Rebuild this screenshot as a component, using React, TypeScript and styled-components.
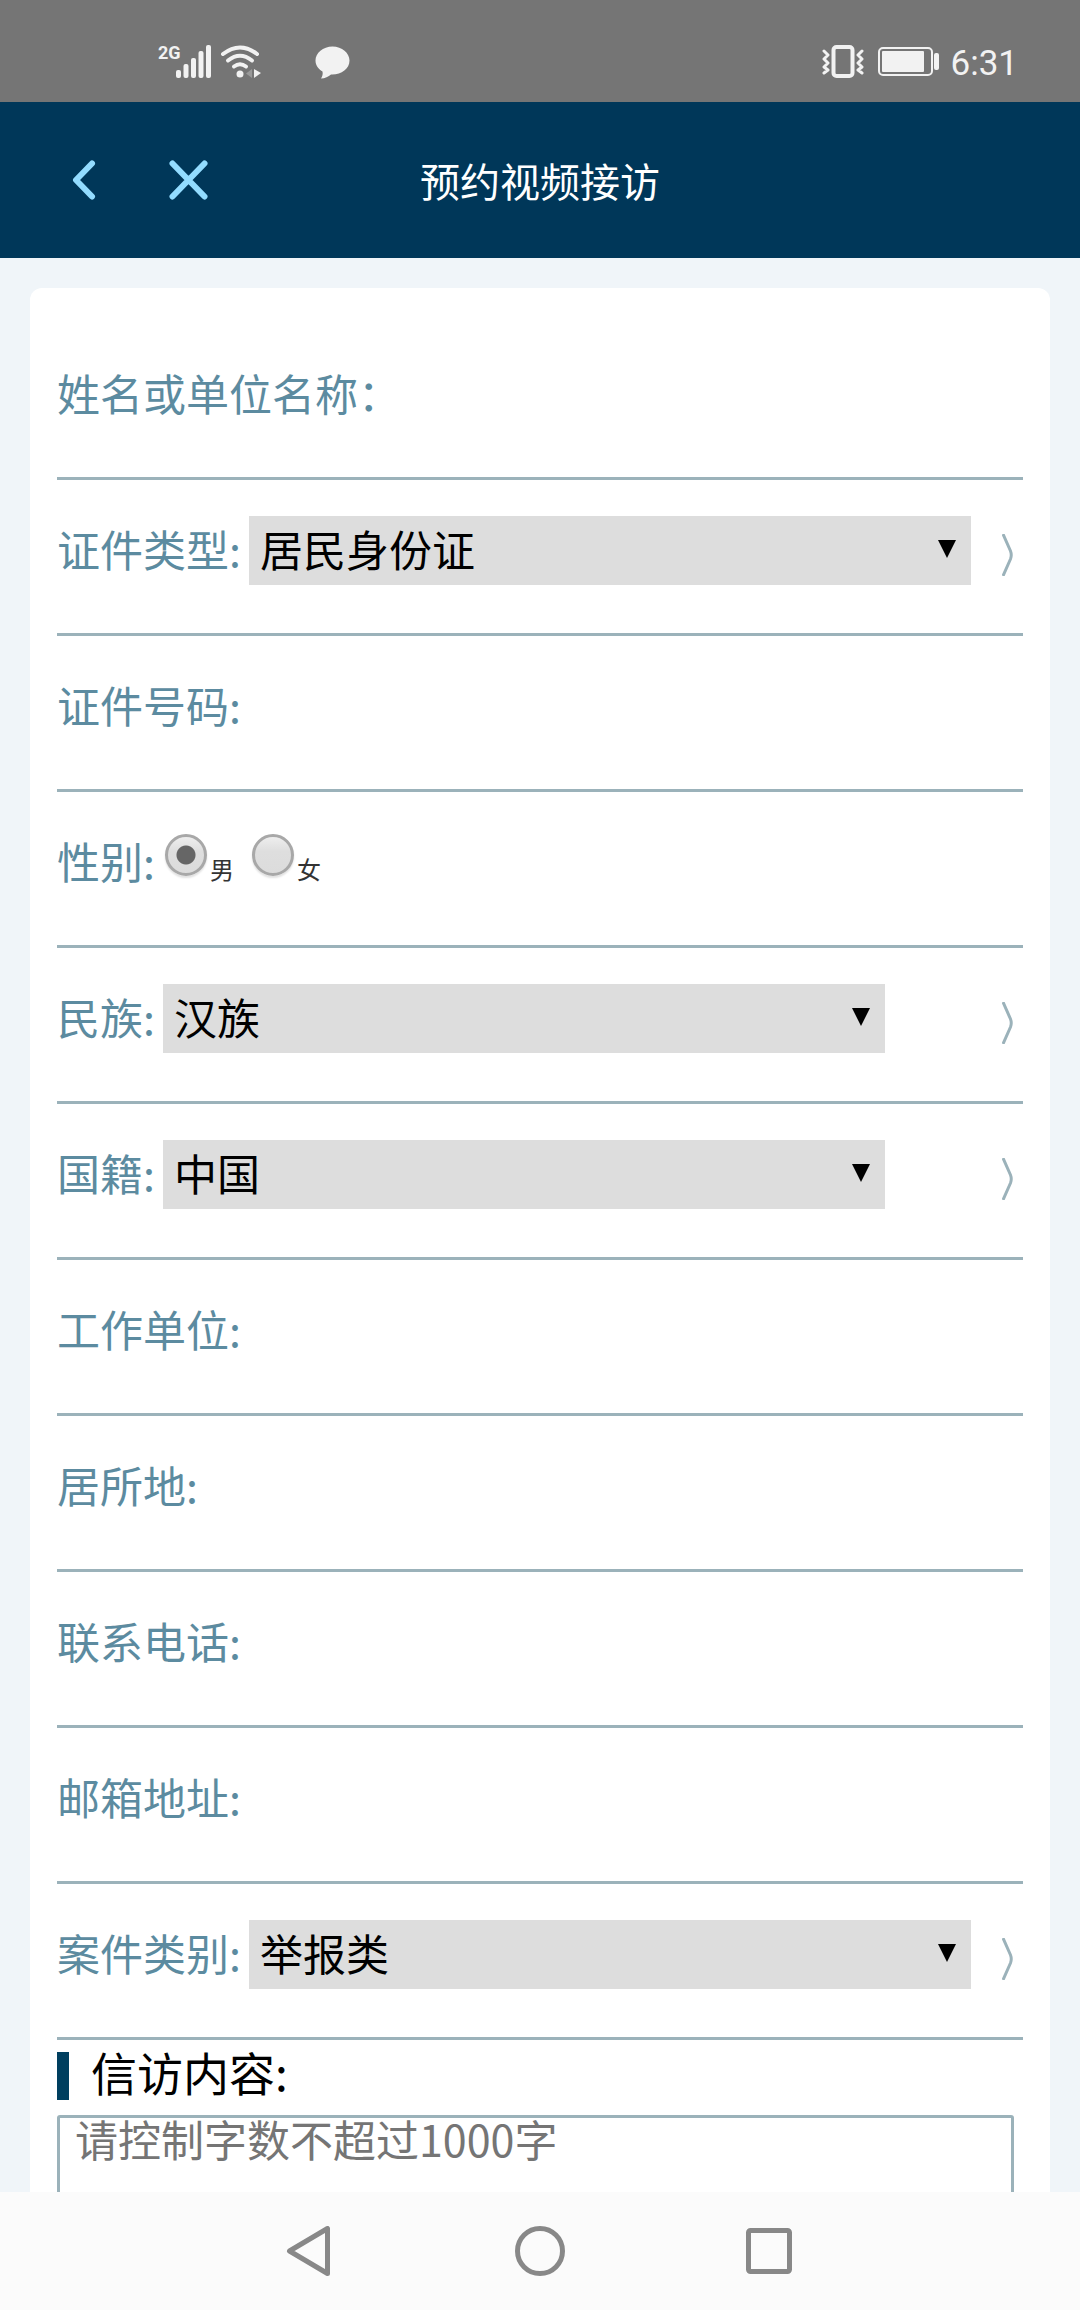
import React, { useState } from 'react';
import styled, { createGlobalStyle } from 'styled-components';

const colors = {
  header: '#003759',
  accent: '#93dcff',
  page: '#f0f5f9',
  label: '#5c8ba0',
  line: '#9bb2ba',
  field: '#dddddd',
  status: '#757575',
  statusInk: '#f2f2f2',
  nav: '#fbfbfb',
  navInk: '#888888',
};

const GlobalStyle = createGlobalStyle`
  *, *::before, *::after { box-sizing: border-box; }
  body {
    margin: 0;
    background: ${colors.page};
    font-family: "Noto Sans CJK SC", "Noto Sans", sans-serif;
    font-size: 43px;
  }
  button, input, select, textarea { font: inherit; margin: 0; }
`;

const Screen = styled.div`
  display: flex;
  flex-direction: column;
  height: 100vh;
  overflow: hidden;
`;

const StatusBar = styled.div`
  display: flex;
  flex: none;
  justify-content: space-between;
  height: 102px;
  padding: 45px 62px 21px 158px;
  background: ${colors.status};
  color: ${colors.statusInk};
`;

const StatusGroup = styled.div<{ $gap: number }>`
  display: flex;
  align-items: flex-start;
  gap: ${({ $gap }) => $gap}px;
  svg { display: block; }
`;

const Network = styled.span`
  display: flex;
  align-items: flex-start;
`;

const NetworkType = styled.span`
  width: 18px;
  font: 700 18px/16px "Liberation Sans Narrow", Roboto, sans-serif;
`;

const Clock = styled.time`
  font: 400 35px/38px Roboto, sans-serif;
`;

const Header = styled.header`
  display: grid;
  flex: none;
  grid-template-columns: 1fr auto 1fr;
  align-items: center;
  height: 156px;
  padding: 0 64px;
  background: ${colors.header};
`;

const HeaderActions = styled.div`
  display: flex;
  gap: 56px;
`;

const IconButton = styled.button`
  display: flex;
  padding: 0;
  border: 0;
  background: none;
  color: inherit;
  cursor: pointer;
`;

const HeaderButton = styled(IconButton)`
  color: ${colors.accent};
`;

const PageTitle = styled.h1`
  margin: 0;
  color: #fff;
  font-size: 40px;
  font-weight: 400;
  line-height: 60px;
`;

const Content = styled.main`
  flex: 1;
  min-height: 0;
  padding: 30px 30px 0;
  overflow-y: auto;
  scrollbar-width: none;
`;

const Card = styled.form`
  padding: 36px 27px;
  border-radius: 12px;
  background: #fff;
`;

const Row = styled.div`
  display: flex;
  align-items: center;
  gap: 8px;
  height: 156px;
  padding: 36px 0 48px;
  border-bottom: 3px solid ${colors.line};
`;

const Label = styled.label`
  flex: none;
  color: ${colors.label};
  line-height: 64px;
  padding-bottom: 5px;
`;

const TextInput = styled.input`
  flex: 1;
  min-width: 0;
  height: 69px;
  padding: 0 12px;
  border: 0;
  outline: 0;
  background: transparent;
  color: #000;
`;

const SelectBox = styled.div`
  position: relative;
  flex: 0 1 722px;
  height: 69px;
`;

const Select = styled.select`
  appearance: none;
  display: block;
  width: 100%;
  height: 69px;
  padding: 0 48px 5px 11px;
  border: 0;
  border-radius: 0;
  background: ${colors.field};
  color: #000;
  line-height: 64px;
`;

const SelectArrow = styled.svg`
  position: absolute;
  top: 24px;
  right: 15px;
  pointer-events: none;
`;

const Chevron = styled.svg`
  flex: none;
  margin: 9px 9px 0 auto;
`;

const RadioGroup = styled.div`
  display: flex;
  align-self: flex-start;
  gap: 18px;
  padding-left: 2px;
`;

const RadioOption = styled.label`
  display: flex;
  align-items: flex-end;
  gap: 3px;
  height: 54px;
  color: #333;
  font-size: 24px;
  line-height: 26px;
`;

const Radio = styled.input`
  appearance: none;
  width: 42px;
  height: 42px;
  margin-bottom: 6px;
  border: 3px solid #a8a8a8;
  border-radius: 50%;
  background: linear-gradient(#eeeeee, #dedede 40%, #dcdcdc);
  box-shadow: 0 2px 2px rgba(0, 0, 0, 0.12);

  &:checked {
    background:
      radial-gradient(circle, #666 0 9px, transparent 10px),
      linear-gradient(#eeeeee, #dedede 40%, #dcdcdc);
  }
`;

const SectionHeading = styled.h2`
  display: flex;
  gap: 22px;
  height: 48px;
  margin: 12px 0 15px;
  color: #000;
  font-size: 46px;
  font-weight: 400;
  line-height: 38px;

  &::before {
    content: "";
    width: 12px;
    background: #003f5f;
  }
`;

const Message = styled.textarea`
  display: block;
  width: calc(100% - 9px);
  height: 320px;
  padding: 0 15px;
  border: 3px solid ${colors.line};
  border-radius: 3px;
  outline: 0;
  resize: none;
  line-height: 40px;
  color: #000;

  &::placeholder { color: #757575; opacity: 1; }
`;

const NavBar = styled.nav`
  display: flex;
  flex: none;
  align-items: center;
  justify-content: center;
  gap: 179px;
  height: 118px;
  background: ${colors.nav};
  color: ${colors.navInk};
`;

type FieldProps = { id: string; label: string };

function TextField({ id, label }: FieldProps) {
  return (
    <Row>
      <Label htmlFor={id}>{label}</Label>
      <TextInput id={id} type="text" />
    </Row>
  );
}

function SelectField({ id, label, options }: FieldProps & { options: string[] }) {
  return (
    <Row>
      <Label htmlFor={id}>{label}</Label>
      <SelectBox>
        <Select id={id}>
          {options.map((option) => (
            <option key={option}>{option}</option>
          ))}
        </Select>
        <SelectArrow width="18" height="18" viewBox="0 0 18 18" aria-hidden="true">
          <path d="M0 0h18L9 18z" fill="#000" />
        </SelectArrow>
      </SelectBox>
      <Chevron width="12" height="42" viewBox="0 0 12 42" fill="none" stroke={colors.line} strokeWidth="3" aria-hidden="true">
        <path d="M1 0L8.500 17Q10 21 8.500 25L1 42" />
      </Chevron>
    </Row>
  );
}

function GenderField() {
  const [gender, setGender] = useState('男');
  return (
    <Row>
      <Label as="span" id="gender-label">性别:</Label>
      <RadioGroup role="radiogroup" aria-labelledby="gender-label">
        {['男', '女'].map((value) => (
          <RadioOption key={value}>
            <Radio
              type="radio"
              name="gender"
              value={value}
              checked={gender === value}
              onChange={() => setGender(value)}
            />
            {value}
          </RadioOption>
        ))}
      </RadioGroup>
    </Row>
  );
}

function SignalIcon() {
  return (
    <svg width="36" height="34" viewBox="0 0 36 34" fill="currentColor" aria-hidden="true">
      <rect x="0" y="25" width="5" height="8" rx="2" />
      <rect x="7.500" y="19" width="5" height="14" rx="2" />
      <rect x="15" y="13" width="5" height="20" rx="2" />
      <rect x="22.500" y="6" width="5" height="27" rx="2" />
      <rect x="30" y="0" width="5" height="33" rx="2" />
    </svg>
  );
}

function WifiIcon() {
  return (
    <svg width="42" height="34" viewBox="0 0 42 34" fill="none" stroke="currentColor" strokeWidth="4" strokeLinecap="round" aria-hidden="true">
      <path d="M3 9Q20 -4 37 9" />
      <path d="M8 15.500Q20 6 32 15.500" />
      <path d="M14 21.500Q20 17 26 21.500" />
      <circle cx="20" cy="29" r="3.500" fill="currentColor" stroke="none" />
      <path d="M32 24v9l-6-4.500z" fill="#999" stroke="none" />
      <path d="M34 24v9l7-5z" fill="currentColor" stroke="none" />
    </svg>
  );
}

function BubbleIcon() {
  return (
    <svg width="35" height="34" viewBox="0 0 35 34" fill="currentColor" aria-hidden="true">
      <path d="M17.500 1.500C8 1.500 0.500 8 0.500 15.500C0.500 20 3 24 7.500 26.500C8 29 7.500 31 6 33.500C10 33.500 13.500 31.500 16 29.500C26 30 34.500 24 34.500 15.500C34.500 8 27 1.500 17.500 1.500z" />
    </svg>
  );
}

function VibrateIcon() {
  return (
    <svg width="44" height="34" viewBox="0 0 44 34" fill="none" stroke="currentColor" strokeWidth="3" strokeLinecap="round" strokeLinejoin="round" aria-hidden="true">
      <rect x="11.500" y="2" width="19" height="29" rx="3" strokeWidth="4" />
      <path d="M2 6l4 4-4 4 4 4-4 4 4 3-4 3M40 6l-4 4 4 4-4 4 4 4-4 3 4 3" />
    </svg>
  );
}

function BatteryIcon() {
  return (
    <svg width="61" height="34" viewBox="0 0 61 34" fill="currentColor" aria-hidden="true">
      <rect x="1" y="3" width="53" height="27" rx="4" fill="none" stroke="currentColor" strokeWidth="2" />
      <rect x="4" y="6" width="42" height="21" rx="1" />
      <rect x="56" y="8" width="5" height="17" rx="2" />
    </svg>
  );
}

export default function App() {
  return (
    <>
      <GlobalStyle />
      <Screen>
        <StatusBar>
          <StatusGroup $gap={53}>
            <StatusGroup $gap={8}>
              <Network>
                <NetworkType>2G</NetworkType>
                <SignalIcon />
              </Network>
              <WifiIcon />
            </StatusGroup>
            <BubbleIcon />
          </StatusGroup>
          <StatusGroup $gap={12}>
            <VibrateIcon />
            <BatteryIcon />
            <Clock>6:31</Clock>
          </StatusGroup>
        </StatusBar>

        <Header>
          <HeaderActions>
            <HeaderButton type="button" aria-label="返回">
              <svg width="40" height="40" viewBox="0 0 40 40" fill="none" stroke="currentColor" strokeWidth="6" strokeLinecap="round" strokeLinejoin="round">
                <path d="M28 3.500L12 20l16 16.500" />
              </svg>
            </HeaderButton>
            <HeaderButton type="button" aria-label="关闭">
              <svg width="60" height="40" viewBox="0 0 60 40" fill="none" stroke="currentColor" strokeWidth="6" strokeLinecap="round">
                <path d="M12.500 3.500l32 33M44.500 3.500l-32 33" />
              </svg>
            </HeaderButton>
          </HeaderActions>
          <PageTitle>预约视频接访</PageTitle>
        </Header>

        <Content>
          <Card>
            <TextField id="name" label="姓名或单位名称：" />
            <SelectField id="id-type" label="证件类型:" options={['居民身份证', '护照']} />
            <TextField id="id-number" label="证件号码:" />
            <GenderField />
            <SelectField id="ethnicity" label="民族:" options={['汉族', '其他']} />
            <SelectField id="nationality" label="国籍:" options={['中国', '其他']} />
            <TextField id="employer" label="工作单位:" />
            <TextField id="residence" label="居所地:" />
            <TextField id="phone" label="联系电话:" />
            <TextField id="email" label="邮箱地址:" />
            <SelectField id="case-type" label="案件类别:" options={['举报类', '其他']} />
            <SectionHeading id="message-title">信访内容:</SectionHeading>
            <Message aria-labelledby="message-title" placeholder="请控制字数不超过1000字" maxLength={1000} />
          </Card>
        </Content>

        <NavBar aria-label="系统导航">
          <IconButton type="button" aria-label="后退">
            <svg width="50" height="50" viewBox="0 0 50 50" fill="none" stroke="currentColor" strokeWidth="5" strokeLinejoin="round">
              <path d="M41.500 2.500v45L3.500 25z" />
            </svg>
          </IconButton>
          <IconButton type="button" aria-label="主页">
            <svg width="50" height="50" viewBox="0 0 50 50" fill="none" stroke="currentColor" strokeWidth="5">
              <circle cx="25" cy="25" r="22.500" />
            </svg>
          </IconButton>
          <IconButton type="button" aria-label="最近任务">
            <svg width="50" height="50" viewBox="0 0 50 50" fill="none" stroke="currentColor" strokeWidth="5">
              <rect x="4.500" y="4.500" width="41" height="41" rx="2" />
            </svg>
          </IconButton>
        </NavBar>
      </Screen>
    </>
  );
}
